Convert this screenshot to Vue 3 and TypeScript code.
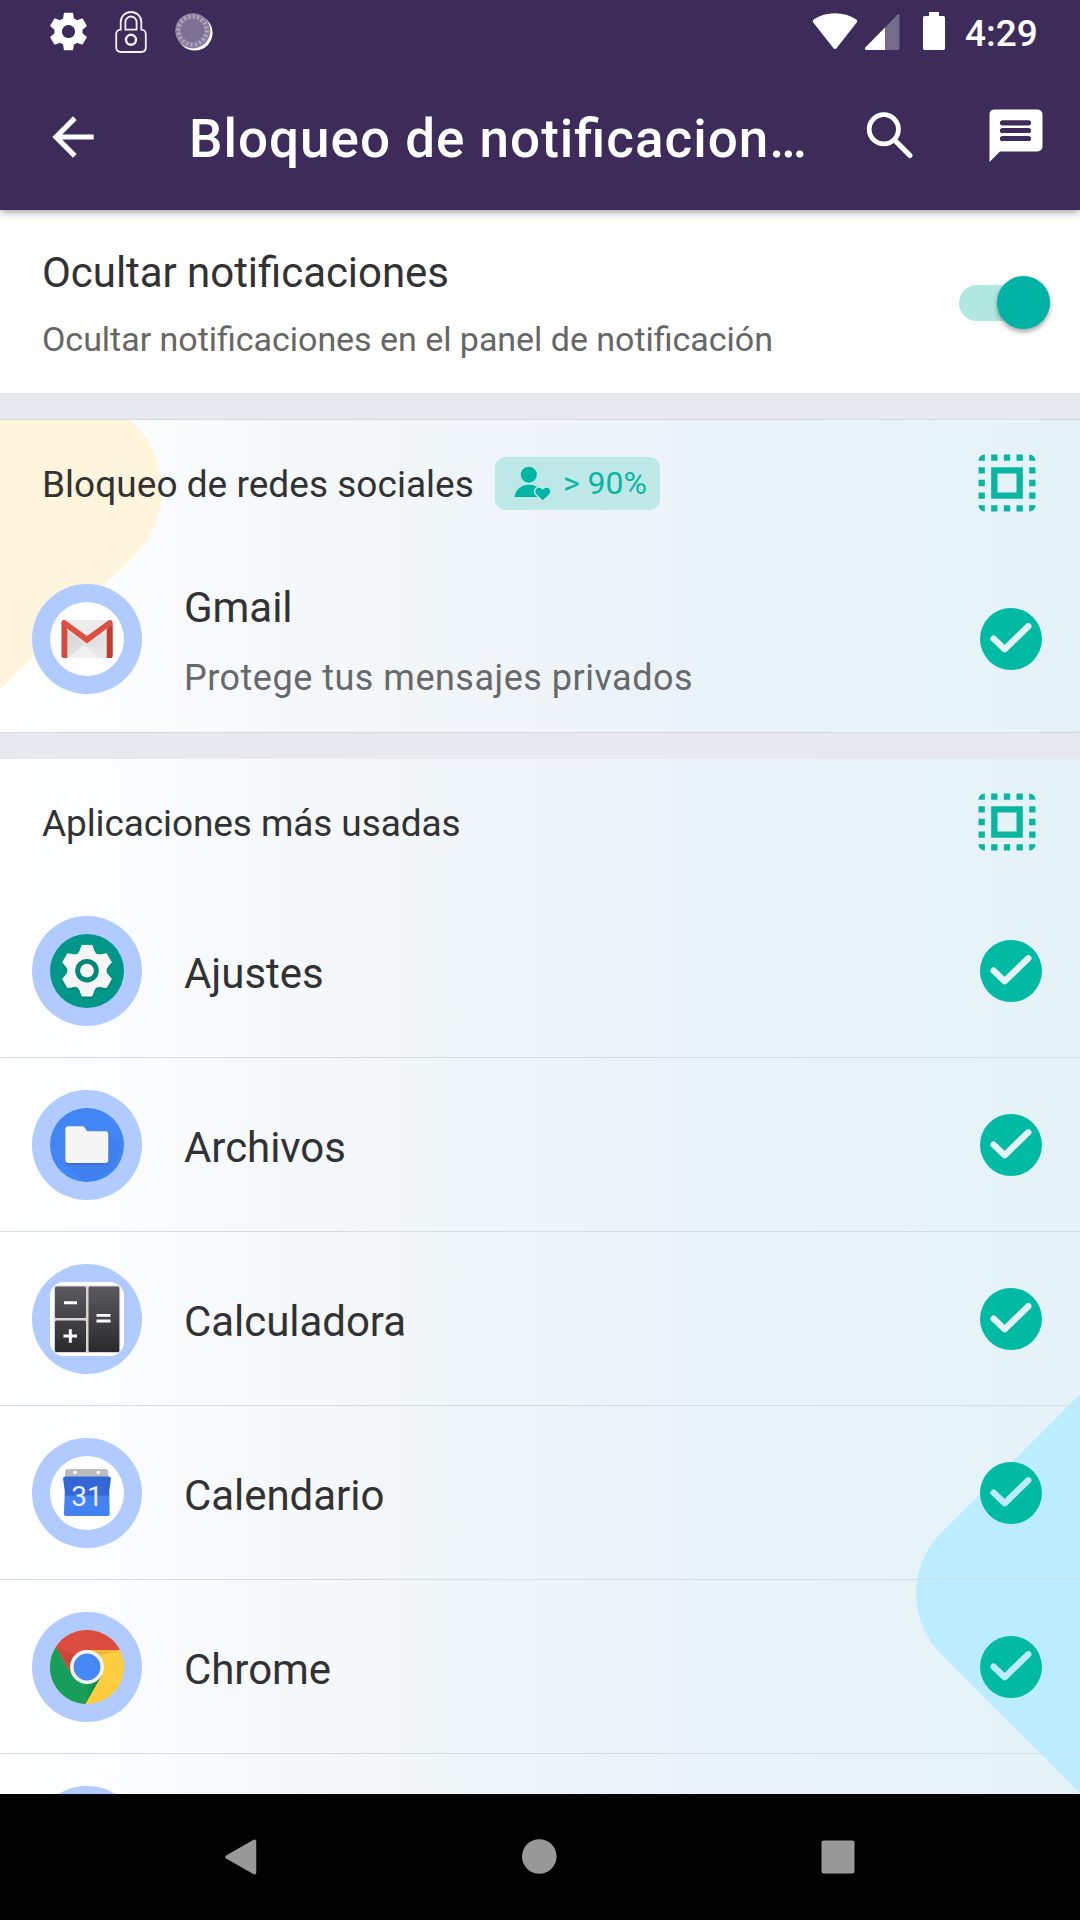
<script setup lang="ts">
interface AppEntry {
  id: string
  name: string
}

const apps: AppEntry[] = [
  { id: 'settings', name: 'Ajustes' },
  { id: 'files', name: 'Archivos' },
  { id: 'calculator', name: 'Calculadora' },
  { id: 'calendar', name: 'Calendario' },
  { id: 'chrome', name: 'Chrome' },
]

const selectAllPath =
  'M3 5h2V3c-1.1 0-2 .9-2 2zm0 8h2v-2H3v2zm4 8h2v-2H7v2zM3 9h2V7H3v2zm10-6h-2v2h2V3zm6 0v2h2c0-1.1-.9-2-2-2zM5 21v-2H3c0 1.1.9 2 2 2zm-2-4h2v-2H3v2zM9 3H7v2h2V3zm2 18h2v-2h-2v2zm8-8h2v-2h-2v2zm0 8c1.1 0 2-.9 2-2h-2v2zm0-12h2V7h-2v2zm0 8h2v-2h-2v2zm-4 4h2v-2h-2v2zm0-16h2V3h-2v2zM7 17h10V7H7v10zm2-8h6v6H9V9z'

// Outline of a six-toothed wheel centred on the origin
function gearOutline(): string {
  const tooth: [number, number][] = [
    [-7, -19.8],
    [-5, -25.3],
    [5, -25.3],
    [7, -19.8],
    [8.75, -15.2],
  ]
  let d = ''
  for (let k = 0; k < 6; k++) {
    const a = (k * Math.PI) / 3
    const p = tooth.map(([x, y]) => {
      const rx = x * Math.cos(a) - y * Math.sin(a)
      const ry = x * Math.sin(a) + y * Math.cos(a)
      return `${rx.toFixed(2)} ${ry.toFixed(2)}`
    })
    d += k === 0 ? `M${p[0]}` : ` ${p[0]}`
    d += `L${p[1]}L${p[2]}L${p[3]}Q${p[4]}`
  }
  return `${d} -7 -19.8Z`
}
const gear = gearOutline()
</script>

<template>
  <div class="screen">
    <header class="top">
      <div class="status">
        <svg class="st-gear" width="45" height="45" viewBox="0 0 24 24" fill="#fff">
          <path d="M19.43 12.98c.04-.32.07-.64.07-.98s-.03-.66-.07-.98l2.11-1.65c.19-.15.24-.42.12-.64l-2-3.46c-.12-.22-.39-.3-.61-.22l-2.49 1c-.52-.4-1.08-.73-1.69-.98l-.38-2.65C14.46 2.18 14.25 2 14 2h-4c-.25 0-.46.18-.49.42l-.38 2.65c-.61.25-1.17.59-1.69.98l-2.49-1c-.23-.09-.49 0-.61.22l-2 3.46c-.13.22-.07.49.12.64l2.11 1.65c-.04.32-.07.65-.07.98s.03.66.07.98l-2.11 1.65c-.19.15-.24.42-.12.64l2 3.46c.12.22.39.3.61.22l2.49-1c.52.4 1.08.73 1.69.98l.38 2.65c.03.24.24.42.49.42h4c.25 0 .46-.18.49-.42l.38-2.65c.61-.25 1.17-.59 1.69-.98l2.49 1c.23.09.49 0 .61-.22l2-3.46c.12-.22.07-.49-.12-.64l-2.11-1.65zM12 15.5c-1.93 0-3.5-1.57-3.5-3.5s1.57-3.5 3.5-3.5 3.5 1.57 3.5 3.5-1.57 3.5-3.5 3.5z" />
        </svg>
        <svg class="st-lock" width="32" height="42" viewBox="0 0 32 42" fill="none" stroke="#f4f0fa" stroke-width="1.8">
          <path d="M5.7 18.6V11a10.3 10 0 0 1 20.6 0v7.6c2.600 0 4.500 1.900 4.500 4.500V36.500c0 2.700-1.900 4.500-4.600 4.500H5.800c-2.700 0-4.600-1.800-4.600-4.500V23.100c0-2.600 1.900-4.500 4.500-4.500z" />
          <path d="M10.400 18.600V11.200a5.600 5.700 0 0 1 11.200 0v7.400z" />
          <circle cx="16" cy="28.800" r="5" stroke-width="2.400" />
        </svg>
        <svg class="st-sync" width="38" height="40" viewBox="0 0 38 40" fill="none">
          <circle cx="19.800" cy="20.800" r="17.800" fill="#fff" />
          <circle cx="17.800" cy="18.800" r="17.600" fill="#8b809f" />
          <circle cx="17.500" cy="18.500" r="14" stroke="#b3abc1" stroke-width="4.600" stroke-dasharray="1.600 2.798" />
          <circle cx="17.500" cy="18.500" r="11.800" fill="#7c7194" />
        </svg>
        <div class="grow"></div>
        <svg class="st-radio" width="133" height="40" viewBox="0 0 133 40" fill="#fff">
          <path d="M1.300 10.500C.5 9.400.6 8.300 1.700 7.400 14-.8 32-.8 44.300 7.400c1.100.900 1.200 2 .4 3.100L24.500 36.200c-.8 1-2.200 1-3 0z" />
          <path d="M86 3.800v32.700a1.500 1.500 0 0 1-1.500 1.500H54.200c-2 0-2.300-1.600-1.200-2.800L83.600 2.900c1.200-1 2.400-.6 2.400.9z" opacity=".3" transform="translate(1.500)" />
          <path d="M73 15.500V38H54.700c-2 0-2.300-1.600-1.200-2.800z" />
          <path d="M117 0h10v4h4.500a1.700 1.700 0 0 1 1.500 1.600v30.900a1.600 1.600 0 0 1-1.500 1.500h-19a1.600 1.600 0 0 1-1.500-1.500V5.600A1.700 1.700 0 0 1 112.500 4H117z" />
        </svg>
        <span class="clock">4:29</span>
      </div>
      <div class="bar">
        <svg class="back" width="62" height="62" viewBox="0 0 24 24" fill="#fff">
          <path d="M20 11H7.830l5.590-5.590L12 4l-8 8 8 8 1.410-1.410L7.830 13H20v-2z" />
        </svg>
        <h1>Bloqueo de notificacion…</h1>
        <svg class="search" width="48" height="48" viewBox="0 0 48 48" fill="none" stroke="#fff">
          <circle cx="17.800" cy="17.300" r="14.600" stroke-width="4.800" />
          <path d="M28.500 28L44 43.500" stroke-width="5.200" stroke-linecap="round" />
        </svg>
        <svg class="chat" width="54" height="54" viewBox="0 0 54 54">
          <path d="M5 .5h43.500A5 5 0 0 1 53.500 5.500v32a5 5 0 0 1-5 5H11L.5 53V5.500A5 5 0 0 1 5 .5z" fill="#fff" />
          <path d="M13.500 13.800h26M13.500 21.500h26M13.500 29.500h26" stroke="#3d2c5a" stroke-width="5.200" stroke-linecap="round" />
        </svg>
      </div>
    </header>

    <main class="content">
      <section class="toggle-row">
        <div class="toggle-text">
          <div class="primary">Ocultar notificaciones</div>
          <div class="secondary">Ocultar notificaciones en el panel de notificación</div>
        </div>
        <div class="switch"><div class="thumb"></div></div>
      </section>

      <section class="card first">
        <svg class="shape" width="170" height="280" viewBox="0 420 170 280">
          <path d="M0 420H129.700A92 92 0 0 1 135 555L0 690z" fill="#fff5dc" />
        </svg>
        <div class="head">
          <span class="head-title">Bloqueo de redes sociales</span>
          <span class="badge">
            <svg width="37" height="35" viewBox="0 0 37 35">
              <circle cx="14.800" cy="8.700" r="8" fill="#00b5a3" />
              <path d="M.5 31C1.500 23.500 7.500 18.700 15 18.700c5.500 0 9.500 2 12 5.300V31z" fill="#00b5a3" />
              <path
                d="M28.800 34.300L22.800 28.600c-1.900-1.900-1.900-4.200-.6-5.600 1.700-1.900 4.600-1.600 6.600.8 2-2.400 4.900-2.700 6.600-.8 1.300 1.400 1.300 3.700-.6 5.600z"
                fill="#00b5a3"
                stroke="#bee8e7"
                stroke-width="2.600"
                paint-order="stroke"
              />
            </svg>
            <span>&gt; 90%</span>
          </span>
          <svg class="select" width="76" height="76" viewBox="0 0 24 24" fill="#0ab5a2"><path :d="selectAllPath" /></svg>
        </div>
        <div class="row tall">
          <svg class="avatar" width="110" height="110" viewBox="0 0 110 110">
            <defs>
              <linearGradient id="flap" x1="0" y1="0" x2="1" y2="1">
                <stop offset="0" stop-color="#d4d4d4" />
                <stop offset="1" stop-color="#ececec" />
              </linearGradient>
            </defs>
            <circle cx="55" cy="55" r="55" fill="#b1cbff" />
            <circle cx="55" cy="55" r="37" fill="#fff" />
            <rect x="29.500" y="36" width="51" height="38" rx="2.500" fill="#ececec" />
            <path d="M35 47L55 60 75 47V74H35z" fill="url(#flap)" />
            <path d="M35 74L52 61l3 2 3-2 17 13z" fill="#e9e9e9" />
            <path d="M52 61.500L67 74H35z" fill="#f1f1f1" />
            <path d="M29.500 38.500v33A2.500 2.500 0 0 0 32 74h3.300V45zM80.500 38.500v33A2.500 2.500 0 0 1 78 74h-3.300V45z" fill="#d54b3f" />
            <path d="M75 46l5.500-5v31a2 2 0 0 1-2.500 2h-3z" fill="#c5392f" />
            <path d="M32 36c-1.800 0-2.900 1.400-2.600 3.200.1 1 .6 1.700 1.500 2.400L55 59.500l24.100-17.900c.9-.7 1.400-1.400 1.500-2.400.3-1.800-.8-3.200-2.600-3.200-.8 0-1.400.3-2 .7L55 52 34 36.700c-.6-.4-1.200-.7-2-.7z" fill="#de4f43" />
          </svg>
          <div class="row-text">
            <div class="name">Gmail</div>
            <div class="note">Protege tus mensajes privados</div>
          </div>
          <svg class="check" width="62" height="62" viewBox="0 0 62 62">
            <mask id="tick-gmail">
              <rect width="62" height="62" fill="#fff" />
              <path d="M13.700 30.700L24.700 41.200 48.300 18.300" fill="none" stroke="#000" stroke-width="6.400" stroke-linecap="round" stroke-linejoin="round" />
            </mask>
            <circle cx="31" cy="31" r="31" fill="#00baa4" mask="url(#tick-gmail)" />
          </svg>
        </div>
      </section>

      <section class="card second">
        <svg class="shape corner" width="170" height="410" viewBox="910 1388 170 410">
          <path d="M1080 1394L941.500 1532.500a86 86 0 0 0 0 122L1080 1793z" fill="#bcecff" />
        </svg>
        <div class="head">
          <span class="head-title tight">Aplicaciones más usadas</span>
          <svg class="select" width="76" height="76" viewBox="0 0 24 24" fill="#0ab5a2"><path :d="selectAllPath" /></svg>
        </div>
        <div v-for="app in apps" :key="app.id" class="row">
          <svg class="avatar" width="110" height="110" viewBox="0 0 110 110">
            <circle cx="55" cy="55" r="55" fill="#b1cbff" />
            <g v-if="app.id === 'settings'">
              <circle cx="55" cy="55" r="37" fill="#009688" />
              <g transform="translate(55.500 57)"><path :d="gear" fill="#00796b" opacity=".45" stroke="#00796b" stroke-width="1.500" /></g>
              <g transform="translate(55 54.700)">
                <path :d="gear" fill="#f5f5f5" stroke="#f5f5f5" stroke-width="1" stroke-linejoin="round" />
                <circle r="11.800" fill="#00897b" />
                <circle r="6.900" fill="#f7f7f7" />
              </g>
            </g>
            <g v-else-if="app.id === 'files'">
              <circle cx="55" cy="55" r="37" fill="#4285f4" />
              <path d="M76 42l12.500 12.500A37 37 0 0 1 52 92L34.500 74z" fill="#3c78e0" opacity=".35" />
              <path d="M36.300 38.200H50.500a2.500 2.500 0 0 1 2 1L55 43H73.300a3 3 0 0 1 3 3V72a3 3 0 0 1-3 3h-37a3 3 0 0 1-3-3V41.200a3 3 0 0 1 3-3z" fill="#285aae" opacity=".4" />
              <path d="M36.300 36.300H50.500a2.500 2.500 0 0 1 2 1L55 41.300H73.300a3 3 0 0 1 3 3V70a3 3 0 0 1-3 3h-37a3 3 0 0 1-3-3V39.300a3 3 0 0 1 3-3z" fill="#f5f5f5" />
            </g>
            <g v-else-if="app.id === 'calculator'">
              <defs>
                <linearGradient id="keys" x1="0" y1="22" x2="0" y2="88" gradientUnits="userSpaceOnUse">
                  <stop offset="0" stop-color="#5c5b60" />
                  <stop offset="1" stop-color="#2a292e" />
                </linearGradient>
              </defs>
              <rect x="18" y="18" width="74" height="74" rx="14" fill="#fff" />
              <rect x="21.800" y="21.500" width="66.500" height="67.500" rx="2.500" fill="#d9d5d3" />
              <g fill="url(#keys)">
                <rect x="23" y="22.500" width="31" height="31.500" rx="1.500" />
                <rect x="23" y="56.500" width="31" height="31.500" rx="1.500" />
                <rect x="56.500" y="22.500" width="30.800" height="65.500" rx="1.500" />
              </g>
              <path d="M32 38.700h13M31.500 72h13.500M38.300 65.200v13.600M64.500 51.400h14M64.500 57h14" stroke="#fff" stroke-width="2.900" />
            </g>
            <g v-else-if="app.id === 'calendar'">
              <circle cx="55" cy="55" r="37" fill="#fff" />
              <path d="M36 31H73.300a3 3 0 0 1 3 3v7H33v-7a3 3 0 0 1 3-3z" fill="#bdbdbd" />
              <circle cx="43" cy="34.500" r="1.700" fill="#fff" />
              <circle cx="66.300" cy="34.500" r="1.700" fill="#fff" />
              <path d="M33.500 38.400H76.500c1.700 0 2.600 1 2.400 2.600L77.300 52.500V58h-44.600V52.500L31.100 41c-.2-1.600.7-2.600 2.400-2.600z" fill="#3367d6" />
              <path d="M32.700 57.500H77.300L77.700 75.500a2.600 2.600 0 0 1-2.600 2.600H34.500a2.600 2.600 0 0 1-2.600-2.600z" fill="#4283f1" />
              <text x="55" y="68.400" text-anchor="middle" class="day">31</text>
            </g>
            <g v-else>
              <circle cx="55" cy="55" r="37" fill="#ffcd40" />
              <path d="M23.800 35A37 37 0 0 1 87.900 38H55L40.300 63.500z" fill="#db4d40" />
              <path d="M23.800 35A37 37 0 0 0 53.300 92L69.700 63.500H40.300z" fill="#179e5b" />
              <path d="M23.800 35L40.300 63.500 46 44z" fill="#b93c31" opacity=".4" />
              <path d="M55 38H87.900L68 43.500z" fill="#dca52c" opacity=".5" />
              <path d="M53.300 92L69.700 63.500 58 70z" fill="#0d7f47" opacity=".4" />
              <circle cx="55" cy="55" r="17" fill="#f4f4f4" />
              <circle cx="55" cy="55" r="13.400" fill="#4688f4" />
            </g>
          </svg>
          <div class="row-text single"><div class="name">{{ app.name }}</div></div>
          <svg class="check" width="62" height="62" viewBox="0 0 62 62">
            <mask :id="`tick-${app.id}`">
              <rect width="62" height="62" fill="#fff" />
              <path d="M13.700 30.700L24.700 41.200 48.300 18.300" fill="none" stroke="#000" stroke-width="6.400" stroke-linecap="round" stroke-linejoin="round" />
            </mask>
            <circle cx="31" cy="31" r="31" fill="#00baa4" :mask="`url(#tick-${app.id})`" />
          </svg>
        </div>
        <div class="row peek">
          <svg class="avatar" width="110" height="110" viewBox="0 0 110 110"><circle cx="55" cy="55" r="55" fill="#b1cbff" /></svg>
        </div>
      </section>
    </main>

    <nav class="nav">
      <svg width="34" height="38" viewBox="0 0 34 38">
        <path d="M3 19L30.500 3.300V34.700z" fill="#999" stroke="#999" stroke-width="3.500" stroke-linejoin="round" />
      </svg>
      <svg width="36" height="36" viewBox="0 0 36 36"><circle cx="17.300" cy="17.500" r="17.300" fill="#999" /></svg>
      <svg width="34" height="34" viewBox="0 0 34 34"><rect x=".5" y=".5" width="33" height="33" rx="2" fill="#999" /></svg>
    </nav>
  </div>
</template>

<style>
body {
  margin: 0;
  background: #000;
}
</style>

<style scoped>
.screen {
  width: 1080px;
  height: 1920px;
  display: flex;
  flex-direction: column;
  overflow: hidden;
  background: #fff;
  font-family: Roboto, 'Liberation Sans', sans-serif;
  font-feature-settings: 'liga' 1;
  color: #323233;
}
svg {
  display: block;
  flex: none;
}
.top {
  position: relative;
  z-index: 2;
  flex: none;
  height: 210px;
  background: #3d2c5a;
  box-shadow: 0 2px 8px rgba(0, 0, 0, 0.4);
}
.status {
  height: 64px;
  display: flex;
  align-items: flex-start;
  padding: 9px 41px 0 46px;
  box-sizing: border-box;
}
.st-lock {
  margin: 2px 0 0 24px;
}
.st-sync {
  margin: 3px 0 0 28px;
}
.grow {
  flex: 1;
}
.st-radio {
  margin: 3px 20px 0 0;
}
.clock {
  font-size: 37px;
  font-weight: 500;
  line-height: 44px;
  margin-top: 3px;
  color: #fff;
  width: 74px;
}
.bar {
  height: 146px;
  display: flex;
  align-items: flex-start;
  padding: 0 37.500px 0 42px;
}
.back {
  margin-top: 41.500px;
}
h1 {
  flex: 1;
  margin: 43.500px 0 0 85px;
  font-size: 53px;
  line-height: 62px;
  font-weight: 500;
  letter-spacing: 1px;
  white-space: nowrap;
  color: #fff;
}
.search {
  margin: 48px 75px 0 0;
}
.chat {
  margin-top: 45px;
}
.content {
  flex: 1;
  min-height: 0;
  overflow: hidden;
  background: #e8e9ee;
}
.toggle-row {
  height: 183px;
  background: #fff;
  display: flex;
  justify-content: space-between;
  padding: 0 30.500px 0 42px;
}
.toggle-text {
  padding-top: 38px;
}
.primary {
  font-size: 42px;
  line-height: 50px;
  letter-spacing: -0.05px;
}
.secondary {
  margin-top: 20.500px;
  font-size: 34px;
  line-height: 40px;
  letter-spacing: -0.03px;
  color: #666;
}
.switch {
  width: 91px;
  height: 36px;
  margin-top: 74.500px;
  border-radius: 18px;
  background: #b2e8e2;
  display: flex;
  justify-content: flex-end;
  align-items: center;
}
.thumb {
  width: 53px;
  height: 53px;
  flex: none;
  border-radius: 50%;
  background: #00b3a5;
  box-shadow: 0 3px 5px rgba(0, 0, 0, 0.35);
}
.card {
  position: relative;
  background: linear-gradient(90deg, #fff 0, #f9fbfd 160px, #f3f7fa 360px, #eef4f8 540px, #ebf3fa 700px, #e7f3f8 880px, #e4f2f8 1080px);
}
.first {
  margin-top: 26px;
  height: 312px;
  border-top: 1px solid #d8dbe2;
  border-bottom: 1px solid #d8dbe2;
}
.second {
  margin-top: 26px;
}
.shape {
  position: absolute;
  left: 0;
  top: 0;
}
.corner {
  left: auto;
  right: 0;
  top: 629px;
}
.head {
  position: relative;
  height: 125px;
  box-sizing: border-box;
  display: flex;
  align-items: center;
  padding: 1px 35.500px 0 42px;
}
.head-title {
  font-size: 37px;
  line-height: 44px;
  padding-top: 3px;
  letter-spacing: 0.03px;
}
.tight {
  letter-spacing: -0.1px;
}
.badge {
  margin-left: 21px;
  width: 165px;
  height: 53px;
  box-sizing: border-box;
  padding-left: 19px;
  border-radius: 11px;
  background: #bee8e7;
  display: flex;
  align-items: center;
  gap: 12px;
  font-size: 32px;
  line-height: 38px;
  color: #0ab5a0;
  white-space: nowrap;
}
.select {
  margin-left: auto;
}
.row {
  position: relative;
  height: 174px;
  box-sizing: border-box;
  border-bottom: 1px solid #d6dde1;
  display: flex;
  align-items: center;
  padding: 0 38px 0 32px;
}
.tall {
  height: 187px;
  border-bottom: 0;
}
.row-text {
  margin-left: 42px;
  padding-top: 6px;
}
.row-text.single {
  padding-top: 7.500px;
}
.name {
  font-size: 42px;
  line-height: 50px;
  letter-spacing: -0.05px;
}
.note {
  margin-top: 23.500px;
  font-size: 36px;
  line-height: 44px;
  letter-spacing: 0.5px;
  color: #666869;
}
.check {
  margin-left: auto;
}
.day {
  font-family: Roboto, sans-serif;
  font-size: 28px;
  fill: #e8effd;
}
.nav {
  flex: none;
  height: 126px;
  background: #000;
  display: flex;
  align-items: center;
  justify-content: space-between;
  padding: 0 225px 0 224px;
}
</style>
